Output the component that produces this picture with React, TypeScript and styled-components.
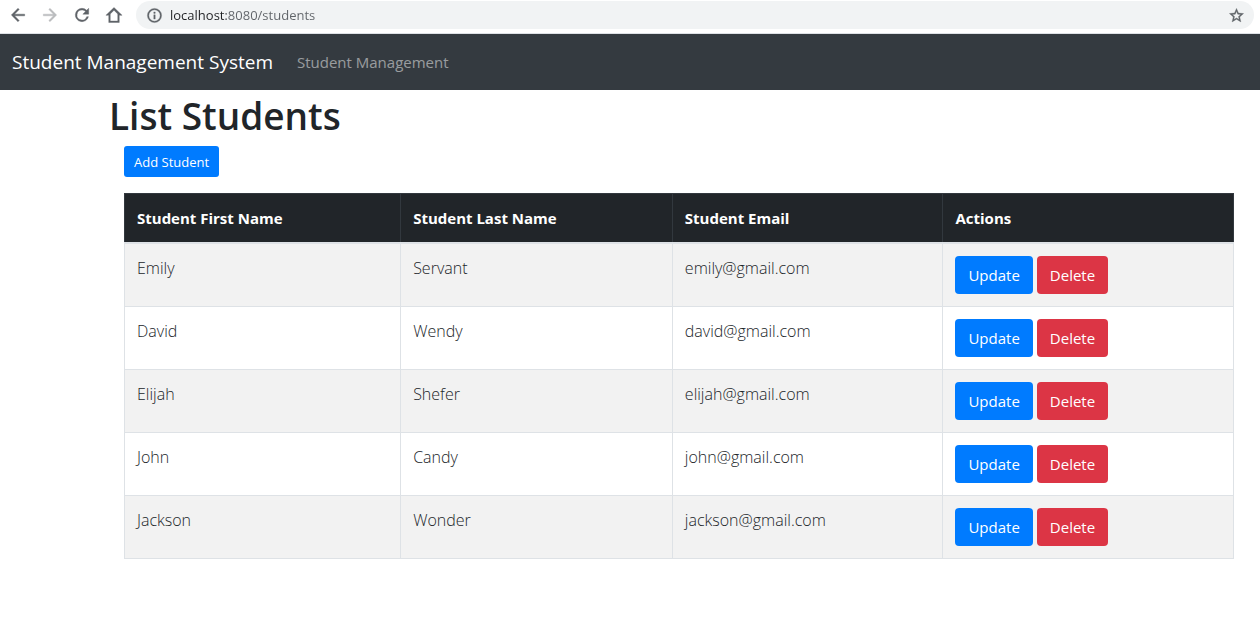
import React from "react";
import styled, { createGlobalStyle } from "styled-components";

const GlobalStyle = createGlobalStyle`
  *, *::before, *::after { box-sizing: border-box; }
  body {
    margin: 0;
    background: #fff;
    color: #212529;
    font-family: "Segoe UI", "Open Sans", "Noto Sans", sans-serif;
    font-size: 15px;
    line-height: 24px;
  }
`;

const BrowserBar = styled.div`
  display: flex;
  align-items: center;
  gap: 8px;
  height: 34px;
  padding: 0 6px 3px;
  border-bottom: 1px solid #dee1e6;
`;

const ToolButton = styled.button<{ $dim?: boolean }>`
  display: flex;
  align-items: center;
  justify-content: center;
  width: 24px;
  height: 24px;
  padding: 0;
  border: 0;
  background: none;
  color: ${(p) => (p.$dim ? "#babcbe" : "#5f6368")};
`;

const AddressBar = styled.div`
  display: flex;
  flex: 1;
  align-items: center;
  gap: 7px;
  height: 28px;
  margin-left: 2px;
  padding: 0 6px 0 10px;
  border-radius: 14px;
  background: #f1f3f4;
  color: #5f6368;
`;

/* The host is drawn darker than the port and the path. */
const AddressInput = styled.input`
  flex: 1;
  min-width: 0;
  padding: 0;
  border: 0;
  outline: 0;
  background: linear-gradient(to right, #202124 56px, #5f6368 56px);
  background-clip: text;
  -webkit-background-clip: text;
  color: transparent;
  font-family: "Segoe UI", "Open Sans", sans-serif;
  font-size: 13px;
  line-height: 20px;
`;

const Navbar = styled.nav`
  display: flex;
  align-items: center;
  gap: 24px;
  height: 56px;
  padding: 0 12px;
  background: #343a40;
`;

const Brand = styled.a`
  color: #fff;
  font-size: 19px;
  line-height: 32px;
  text-decoration: none;
`;

const NavLink = styled.a`
  color: rgba(255, 255, 255, 0.5);
  text-decoration: none;
`;

const Page = styled.main`
  padding: 2px 26px 16px 109px;
`;

const Title = styled.h1`
  margin: 0 0 6px;
  font-size: 37px;
  font-weight: 600;
  line-height: 48px;
`;

const Content = styled.div`
  padding-left: 15px;
`;

const Button = styled.button<{ $danger?: boolean; $small?: boolean }>`
  height: ${(p) => (p.$small ? 31 : 38)}px;
  padding: 0 ${(p) => (p.$small ? 10 : 13)}px;
  border: 0;
  border-radius: ${(p) => (p.$small ? 3 : 4)}px;
  background: ${(p) => (p.$danger ? "#dc3545" : "#007bff")};
  color: #fff;
  font-family: inherit;
  font-size: ${(p) => (p.$small ? 13 : 15)}px;
  line-height: 24px;
`;

const Table = styled.table`
  width: 100%;
  margin-top: 16px;
  border: 1px solid #dee2e6;
  border-collapse: collapse;
  table-layout: fixed;
`;

const HeadCell = styled.th<{ $width: string }>`
  width: ${(p) => p.$width};
  padding: 12px;
  border: 1px solid #32383e;
  border-bottom: 2px solid #dee2e6;
  background: #212529;
  color: #fff;
  font-weight: 700;
  text-align: left;
`;

const Row = styled.tr`
  &:nth-child(odd) { background: #f2f2f2; }
`;

const Cell = styled.td`
  padding: 12px;
  border: 1px solid #dee2e6;
  font-size: 16px;
  font-weight: 300;
  vertical-align: top;
`;

const Actions = styled.div`
  display: flex;
  gap: 4px;
`;

const columns = [
  { label: "Student First Name", width: "24.9%" },
  { label: "Student Last Name", width: "24.5%" },
  { label: "Student Email", width: "24.4%" },
  { label: "Actions", width: "26.2%" },
];

const students = [
  { first: "Emily", last: "Servant", email: "emily@gmail.com" },
  { first: "David", last: "Wendy", email: "david@gmail.com" },
  { first: "Elijah", last: "Shefer", email: "elijah@gmail.com" },
  { first: "John", last: "Candy", email: "john@gmail.com" },
  { first: "Jackson", last: "Wonder", email: "jackson@gmail.com" },
];

const iconPaths = {
  back: "M20 11H7.83l5.59-5.59L12 4l-8 8 8 8 1.41-1.41L7.83 13H20v-2z",
  forward: "M12 4l-1.41 1.41L16.17 11H4v2h12.17l-5.58 5.59L12 20l8-8z",
  reload:
    "M17.65 6.35A7.96 7.96 0 0 0 12 4a8 8 0 1 0 7.73 10h-2.08A6 6 0 1 1 12 6c1.66 0 3.14.69 4.22 1.78L13 11h7V4l-2.35 2.35z",
  home: "M12 2L1.2 12.4H5V22h14v-9.6h3.8L12 2zM17 20H7v-9.4l5-4.9 5 4.9V20z",
  info: "M11 7h2v2h-2V7zm0 4h2v6h-2v-6zm1-9a10 10 0 1 0 0 20 10 10 0 0 0 0-20zm0 18a8 8 0 1 1 0-16 8 8 0 0 1 0 16z",
  star: "M22 9.24l-7.19-.62L12 2 9.19 8.63 2 9.24l5.46 4.73L5.82 21 12 17.27 18.18 21l-1.63-7.03L22 9.24zM12 15.4l-3.76 2.27 1-4.28-3.32-2.88 4.38-.38L12 6.1l1.71 4.04 4.38.38-3.32 2.88 1 4.28L12 15.4z",
};

const IconSvg = styled.svg`
  flex: none;
  fill: currentColor;
  stroke: currentColor;
  stroke-width: 0.5;
`;

function Icon({ name, size }: { name: keyof typeof iconPaths; size: number }) {
  return (
    <IconSvg width={size} height={size} viewBox="0 0 24 24" aria-hidden="true">
      <path d={iconPaths[name]} />
    </IconSvg>
  );
}

export default function App() {
  return (
    <>
      <GlobalStyle />
      <BrowserBar>
        <ToolButton aria-label="Back"><Icon name="back" size={20} /></ToolButton>
        <ToolButton aria-label="Forward" $dim><Icon name="forward" size={20} /></ToolButton>
        <ToolButton aria-label="Reload"><Icon name="reload" size={20} /></ToolButton>
        <ToolButton aria-label="Home"><Icon name="home" size={18} /></ToolButton>
        <AddressBar>
          <Icon name="info" size={17} />
          <AddressInput aria-label="Address" defaultValue="localhost:8080/students" />
          <ToolButton aria-label="Bookmark"><Icon name="star" size={17} /></ToolButton>
        </AddressBar>
      </BrowserBar>
      <Navbar>
        <Brand href="#">Student Management System</Brand>
        <NavLink href="#">Student Management</NavLink>
      </Navbar>
      <Page>
        <Title>List Students</Title>
        <Content>
          <Button $small>Add Student</Button>
          <Table>
            <thead>
              <tr>
                {columns.map((c) => (
                  <HeadCell key={c.label} $width={c.width} scope="col">{c.label}</HeadCell>
                ))}
              </tr>
            </thead>
            <tbody>
              {students.map((s) => (
                <Row key={s.email}>
                  <Cell>{s.first}</Cell>
                  <Cell>{s.last}</Cell>
                  <Cell>{s.email}</Cell>
                  <Cell>
                    <Actions>
                      <Button>Update</Button>
                      <Button $danger>Delete</Button>
                    </Actions>
                  </Cell>
                </Row>
              ))}
            </tbody>
          </Table>
        </Content>
      </Page>
    </>
  );
}
